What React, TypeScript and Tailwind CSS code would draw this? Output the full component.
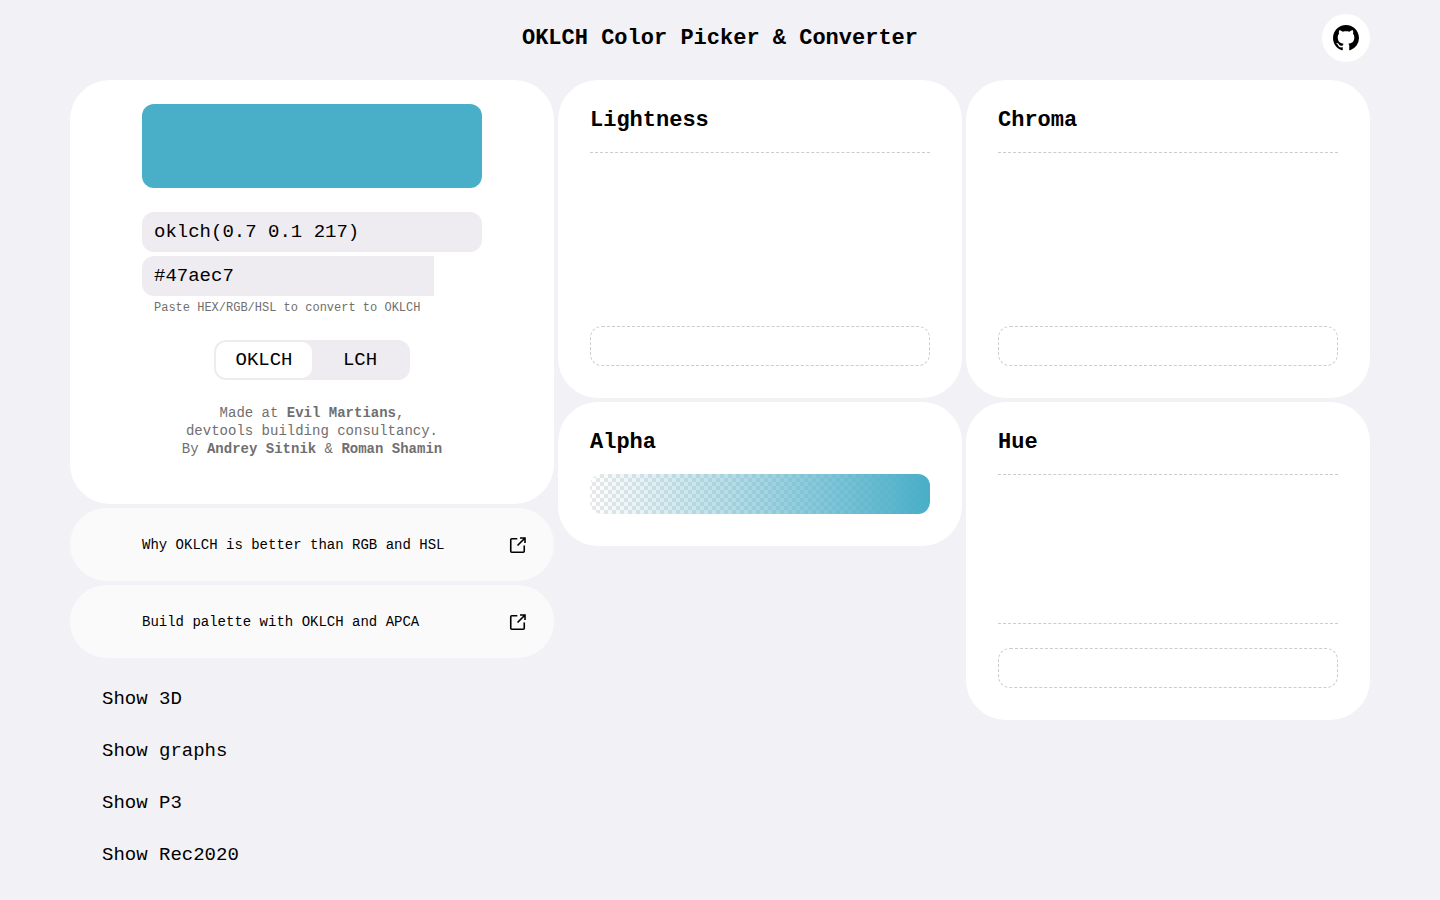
import { useState } from 'react';

const MONO = "font-['Liberation_Mono','DejaVu_Sans_Mono',monospace]";

function GithubMark() {
  return (
    <svg viewBox="0 0 16 16" className="size-[26px]" fill="currentColor" aria-hidden="true">
      <path d="M8 0C3.58 0 0 3.58 0 8c0 3.54 2.29 6.53 5.47 7.59.4.07.55-.17.55-.38 0-.19-.01-.82-.01-1.49-2.01.37-2.53-.49-2.69-.94-.09-.23-.48-.94-.82-1.13-.28-.15-.68-.52-.01-.53.63-.01 1.08.58 1.23.82.72 1.21 1.87.87 2.33.66.07-.52.28-.87.51-1.07-1.78-.2-3.64-.89-3.64-3.95 0-.87.31-1.59.82-2.15-.08-.2-.36-1.02.08-2.12 0 0 .67-.21 2.2.82.64-.18 1.32-.27 2-.27s1.36.09 2 .27c1.53-1.04 2.2-.82 2.2-.82.44 1.1.16 1.92.08 2.12.51.56.82 1.27.82 2.15 0 3.07-1.87 3.75-3.65 3.95.29.25.54.73.54 1.48 0 1.07-.01 1.93-.01 2.2 0 .21.15.46.55.38A8.01 8.01 0 0 0 16 8c0-4.42-3.58-8-8-8z" />
    </svg>
  );
}

function ExternalIcon() {
  return (
    <svg viewBox="0 0 18 18" className="size-[18px] shrink-0" fill="none" stroke="currentColor" strokeWidth="1.6" aria-hidden="true">
      <path d="M8.3 2.75H2.75a1 1 0 0 0-1 1v11.5a1 1 0 0 0 1 1h11.5a1 1 0 0 0 1-1V9.5" />
      <path d="M11 2h5v5M16 2 8.5 9.5" />
    </svg>
  );
}

const RANGE =
  'block h-10 w-full appearance-none rounded-xl [&::-webkit-slider-thumb]:appearance-none [&::-webkit-slider-thumb]:opacity-0';

function ChartCard({ name, max, value, closed = false }: { name: string; max: number; value: number; closed?: boolean }) {
  const id = name.toLowerCase();
  return (
    <section className="rounded-[40px] bg-white px-8 pt-6 pb-8">
      <h2 className="mb-3.5 text-[22px] leading-[34px] font-bold">
        <label htmlFor={id}>{name}</label>
      </h2>
      <div className={`mb-6 h-[150px] border-t border-dashed border-[#cccccc] ${closed ? 'border-b' : ''}`} />
      <input id={id} type="range" min={0} max={max} step="any" defaultValue={value} className={`${RANGE} border border-dashed border-[#cccccc] bg-transparent`} />
    </section>
  );
}

function ArticleLink({ children }: { children: string }) {
  return (
    <a href="#" className="flex h-[73px] items-center justify-between rounded-[40px] bg-[#fafafb] pr-[27px] pl-[72px] text-sm">
      {children}
      <ExternalIcon />
    </a>
  );
}

export default function App() {
  const [mode, setMode] = useState('OKLCH');
  const [color, setColor] = useState('oklch(0.7 0.1 217)');
  const [hex, setHex] = useState('#47aec7');

  return (
    <div className={`min-h-screen bg-[#f2f1f6] text-black ${MONO}`}>
      <div className="mx-auto max-w-[1308px] px-1">
        <header className="mb-1 grid h-[76px] grid-cols-[48px_1fr_48px] items-center">
          <h1 className="col-start-2 pt-0.5 text-center text-[22px] leading-8 font-bold">OKLCH Color Picker &amp; Converter</h1>
          <a href="#" aria-label="GitHub" className="flex size-12 items-center justify-center rounded-full bg-white">
            <GithubMark />
          </a>
        </header>

        <main className="grid grid-cols-[484fr_404fr_404fr] items-start gap-1">
          <div className="flex flex-col gap-1">
            <section className="rounded-[40px] bg-white px-[72px] pt-6 pb-[46px]">
              <div className="mb-6 h-[84px] rounded-xl bg-[#49aec8]" />
              <input
                aria-label="Color in OKLCH"
                value={color}
                onChange={(e) => setColor(e.target.value)}
                className="mb-1 block h-10 w-full rounded-xl bg-[#eeecf1] px-3 text-[19px]"
              />
              <div className="pr-12">
                <input
                  id="hex"
                  aria-label="Color in HEX"
                  value={hex}
                  onChange={(e) => setHex(e.target.value)}
                  className="block h-10 w-full rounded-l-xl bg-[#eeecf1] px-3 text-[19px]"
                />
              </div>
              <label htmlFor="hex" className="mb-5 block pl-3 text-xs leading-6 whitespace-nowrap text-[#6f6f6f]">
                Paste HEX/RGB/HSL to convert to OKLCH
              </label>
              <fieldset className="mx-auto mb-6 flex w-[196px] rounded-xl bg-[#eeecf1] p-0.5">
                {['OKLCH', 'LCH'].map((item) => (
                  <label key={item} className="flex h-9 flex-1 items-center justify-center rounded-[10px] text-[19px] has-checked:bg-white">
                    <input type="radio" name="mode" className="sr-only" checked={mode === item} onChange={() => setMode(item)} />
                    {item}
                  </label>
                ))}
              </fieldset>
              <p className="text-center text-sm leading-[18px] whitespace-nowrap text-[#6f6f6f]">
                Made at <a href="#" className="font-bold">Evil Martians</a>,<br />
                devtools building consultancy.<br />
                By <a href="#" className="font-bold">Andrey Sitnik</a> &amp; <a href="#" className="font-bold">Roman Shamin</a>
              </p>
            </section>
            <ArticleLink>Why OKLCH is better than RGB and HSL</ArticleLink>
            <ArticleLink>Build palette with OKLCH and APCA</ArticleLink>
            <div className="mt-[11px] flex flex-col items-start pl-8">
              {['Show 3D', 'Show graphs', 'Show P3', 'Show Rec2020'].map((item) => (
                <button key={item} type="button" className="h-[52px] text-[19px]">
                  {item}
                </button>
              ))}
            </div>
          </div>

          <div className="flex flex-col gap-1">
            <ChartCard name="Lightness" max={1} value={0.7} />
            <section className="rounded-[40px] bg-white px-8 pt-6 pb-8">
              <h2 className="mb-3.5 text-[22px] leading-[34px] font-bold">
                <label htmlFor="alpha">Alpha</label>
              </h2>
              <div className="rounded-xl bg-[repeating-conic-gradient(#e8e8e8_0_25%,#ffffff_0_50%)] bg-[length:8px_8px] bg-[position:-2px_0]">
                <input id="alpha" type="range" min={0} max={100} defaultValue={100} className={`${RANGE} bg-[linear-gradient(to_right,#49aec800,#49aec8)]`} />
              </div>
            </section>
          </div>

          <div className="flex flex-col gap-1">
            <ChartCard name="Chroma" max={0.4} value={0.1} />
            <ChartCard name="Hue" max={360} value={217} closed />
          </div>
        </main>
      </div>
    </div>
  );
}
